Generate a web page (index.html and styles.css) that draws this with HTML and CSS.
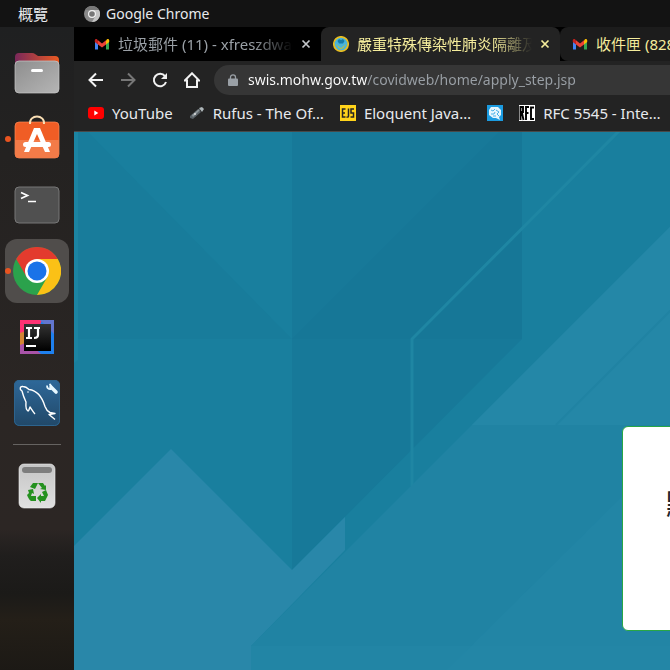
FILE: index.html
```html
<!DOCTYPE html>
<html lang="zh-TW">
<head>
<meta charset="utf-8">
<title>嚴重特殊傳染性肺炎隔離</title>
<link rel="stylesheet" href="styles.css">
</head>
<body>
<svg class="defs" aria-hidden="true">
  <symbol id="gmail" viewBox="0 0 16 16">
    <path d="M1 4v9.500h3V8z" fill="#4285f4"/>
    <path d="M15 4v9.500h-3V8z" fill="#34a853"/>
    <path d="M12 4.500l1-1.200c1-.8 2.200-.1 2.200 1.200V6L12 8.500z" fill="#fbbc04"/>
    <path d="M4 4.500L3 3.300C2 2.500.8 3.200.8 4.500V6L4 8.500z" fill="#c5221f"/>
    <path d="M4 4.300l4 3.100 4-3.100v4.200l-4 3.100-4-3.100z" fill="#ea4335"/>
  </symbol>
  <symbol id="close" viewBox="0 0 10 10">
    <path d="M1.500 1.500l7 7M8.500 1.500l-7 7" stroke="currentColor" stroke-width="1.700" fill="none"/>
  </symbol>
</svg>

<header class="topbar">
  <button class="overview">概覽</button>
  <button class="app-menu">
    <svg class="i16" viewBox="0 0 16 16"><circle cx="8" cy="8" r="8" fill="#8a8a8a"/><path d="M8 4h7a8 8 0 0 1-7 12l3.500-6z" fill="#c4c4c4"/><path d="M1 4a8 8 0 0 1 14 0H8z" fill="#777"/><circle cx="8" cy="8" r="4" fill="#f2f2f2"/><circle cx="8" cy="8" r="2.800" fill="#777"/></svg>
    Google Chrome
  </button>
</header>

<div class="desktop">
  <nav class="dock" aria-label="Dock">
    <button class="tile" aria-label="檔案">
      <svg width="46" height="42" viewBox="0 0 46 42">
        <defs><linearGradient id="fb"><stop offset="0" stop-color="#79285a"/><stop offset="1" stop-color="#ea5a22"/></linearGradient>
        <linearGradient id="ff" x2="1" y2="1"><stop offset="0" stop-color="#8e8e8e"/><stop offset="1" stop-color="#b5b5b5"/></linearGradient></defs>
        <path d="M1 22V5q0-4 4-4h13q2 0 3 1l3 2h17q4 0 4 4v14z" fill="url(#fb)"/>
        <rect x="1" y="9" width="44" height="32" rx="4" fill="url(#ff)" stroke="#c9c9c9" stroke-width=".7"/>
        <rect x="17" y="17" width="12" height="3" rx="1.500" fill="#fff"/>
      </svg>
    </button>
    <button class="tile running" aria-label="軟體">
      <svg width="46" height="52" viewBox="0 0 46 52">
        <rect x="1" y="9" width="44" height="36" rx="4" fill="#f05d25" stroke="#fa8a58" stroke-width=".7"/>
        <path d="M1 27h44v14q0 4-4 4H5q-4 0-4-4z" fill="#f37b48"/>
        <path d="M16 11C15 1 31 1 30 11" fill="none" stroke="#f9deb4" stroke-width="2"/>
        <path d="M20 15h6l10 24h-5l-8-18-8 18h-5z" fill="#fff"/>
        <rect x="9" y="29" width="28" height="5" rx="2.500" fill="#fff"/>
      </svg>
    </button>
    <button class="tile" aria-label="終端機">
      <svg width="46" height="38" viewBox="0 0 46 38">
        <rect x="1" y="1" width="44" height="36" rx="4" fill="#505050" stroke="#777" stroke-width="1"/>
        <path d="M7 6.500l6.500 3L7 12.500M14 15.500h8" fill="none" stroke="#fff" stroke-width="1.700"/>
      </svg>
    </button>
    <button class="tile running current" aria-label="Google Chrome">
      <svg width="48" height="48" viewBox="0 0 48 48">
        <circle cx="24" cy="24" r="24" fill="#2ba24c"/>
        <path d="M24 12h20.800A24 24 0 0 1 24 48l10.400-18z" fill="#fbc116"/>
        <path d="M3.200 12a24 24 0 0 1 41.600 0H24L13.600 30z" fill="#e33b2e"/>
        <circle cx="24" cy="24" r="12" fill="#fff"/><circle cx="24" cy="24" r="9.500" fill="#1a73e8"/>
      </svg>
    </button>
    <button class="tile" aria-label="IntelliJ IDEA">
      <svg width="34" height="34" viewBox="0 0 34 34">
        <defs><linearGradient id="ib" x1="0" y1="0" x2="0" y2="1"><stop offset="0" stop-color="#333"/><stop offset="1" stop-color="#000"/></linearGradient></defs>
        <path d="M0 0h34v34H0z" fill="#1e80ef"/>
        <path d="M0 0h22l-4 10L0 18z" fill="#fe3273"/><path d="M20 0h14v14z" fill="#6276cf"/>
        <path d="M0 13l6-2v13l-6 3z" fill="#d48533"/><path d="M0 25l8-3 13 12H0z" fill="#a953a8"/>
        <path d="M4 4h27v27H4z" fill="url(#ib)"/>
        <path d="M6 8h6M6 18h6M9 8v10M14 8h6M18 8v7q0 3-4 3" fill="none" stroke="#fff" stroke-width="2.200"/><path d="M6 25h10v2H6z" fill="#fff"/>
      </svg>
    </button>
    <button class="tile" aria-label="MySQL Workbench">
      <svg width="46" height="46" viewBox="0 0 46 46">
        <defs><linearGradient id="mb" x1="0" y1="0" x2="0" y2="1"><stop offset="0" stop-color="#2e6899"/><stop offset="1" stop-color="#214868"/></linearGradient></defs>
        <rect width="46" height="46" rx="5" fill="url(#mb)"/>
        <rect x=".5" y=".5" width="45" height="45" rx="5" fill="none" stroke="#2d648e"/>
        <path d="M21 34c-2-2-3-4-5-7-1 2-1 4-2 4-3-2-2-6-2-9-2-4-3-7-4-11C5 9 6 6 9 6.500c2 0 4 1 6 3 8 1 13 7 16 17 1 3 3 5 5 6l5 1-6 1 6 5" fill="none" stroke="#fff" stroke-width="1.400" stroke-linejoin="round"/>
        <circle cx="14" cy="12" r=".8" fill="#fff"/>
        <path d="M37 7l5 5" stroke="#e6f7ff" stroke-width="3.600" stroke-linecap="round"/><path d="M33 5.500q0 4 4 3.500 1-3-1.500-5" fill="none" stroke="#e6f7ff" stroke-width="1.800"/>
      </svg>
    </button>
    <hr class="dock-rule">
    <button class="tile" aria-label="垃圾桶">
      <svg width="38" height="46" viewBox="0 0 38 46">
        <defs><linearGradient id="tb" x1="0" y1="0" x2="0" y2="1"><stop offset="0" stop-color="#c5c5c5"/><stop offset="1" stop-color="#e0e0e0"/></linearGradient></defs>
        <rect x="1" y="1" width="36" height="44" rx="5" fill="url(#tb)" stroke="#f0f0f0" stroke-width=".6"/>
        <rect x="4" y="4" width="30" height="6" rx="3" fill="#7e7e7e"/>
        <g fill="#24911f"><path d="M12 24l3-4h5l-3 6zM20 20h5l2 3 1-1v5l-6-1 2-1z"/>
        <path d="M10 27l5-1 1 5-2-1-1 3h5v5h-5q-2-1-4-6l2-2z"/><path d="M28 27l2 5-3 6h-4v2l-4-5 4-4v2h3l-2-4z"/></g>
      </svg>
    </button>
  </nav>

  <main class="browser">
    <div class="tabs" role="tablist">
      <div class="tab" role="tab">
        <svg class="i16"><use href="#gmail"/></svg>
        <span class="tab-title">垃圾郵件 (11) - xfreszdwa@</span>
        <button class="tab-close" aria-label="關閉"><svg><use href="#close"/></svg></button>
      </div>
      <div class="tab active" role="tab" aria-selected="true">
        <svg class="i16" viewBox="0 0 16 16"><circle cx="8" cy="8" r="7.200" fill="#48b4dc" stroke="#e7bd21" stroke-width="1.700"/><path d="M4.500 5l1.500-2 2 1 2-1 1.500 2-1.500 2.500H6z" fill="#167ba8"/><path d="M3 8.500l5 4 5-4M5 11l3 2 3-2" fill="none" stroke="#a9bf59"/></svg>
        <span class="tab-title">嚴重特殊傳染性肺炎隔離及</span>
        <button class="tab-close" aria-label="關閉"><svg><use href="#close"/></svg></button>
      </div>
      <div class="tab next" role="tab">
        <svg class="i16"><use href="#gmail"/></svg>
        <span class="tab-title">收件匣 (828</span>
      </div>
    </div>

    <div class="toolbar">
      <button class="tool" aria-label="上一頁"><svg viewBox="0 0 16 16"><path d="M15 8H2M8 1.500L1.500 8 8 14.500"/></svg></button>
      <button class="tool dim" aria-label="下一頁"><svg viewBox="0 0 16 16"><path d="M1 8h13M8 1.500L14.500 8 8 14.500"/></svg></button>
      <button class="tool" aria-label="重新載入"><svg viewBox="0 0 16 16"><path d="M13 4.200A6.200 6.200 0 1 0 14 10"/><path d="M15 1v6H9z" class="solid"/></svg></button>
      <button class="tool" aria-label="首頁"><svg viewBox="0 0 16 16"><path d="M.8 8.500L8 1.300l7.200 7.200H13V15H3V8.500z"/></svg></button>
      <label class="omnibox">
        <svg width="10" height="12" viewBox="0 0 10 12"><path d="M1 4.500h8q1 0 1 1V11q0 1-1 1H1q-1 0-1-1V5.500q0-1 1-1z" fill="#9aa0a6"/><path d="M2.500 5V3.300a2.500 2.500 0 0 1 5 0V5" fill="none" stroke="#9aa0a6" stroke-width="1.300"/></svg>
        <input class="address" type="text" aria-label="網址" value="swis.mohw.gov.tw/covidweb/home/apply_step.jsp">
      </label>
    </div>

    <nav class="bookmarks" aria-label="書籤">
      <a href="#"><svg class="i16" viewBox="0 0 16 16"><rect y="2" width="16" height="12" rx="3" fill="#f00"/><path d="M6.300 5.500v5l4-2.500z" fill="#fff"/></svg>YouTube</a>
      <a href="#"><svg class="i16" viewBox="0 0 16 16"><path d="M1 11l8-7 3 3-8 7-3-1z" fill="#596166"/><path d="M3 10l7-6 1 1-7 7z" fill="#8e979b"/><path d="M10 3l3-1 2 2-2 3z" fill="#aeb6b9"/><circle cx="6" cy="9" r="1" fill="#ddd"/></svg>Rufus - The Of…</a>
      <a href="#"><svg class="i16" viewBox="0 0 16 16"><path d="M0 0h16v16H0z" fill="#ffd31a"/><path d="M5.500 4H2.500v8h3M2.500 8h2.500M8.500 3.500V11q0 1.500-2 1M14 4h-3v4h2.500v4H10.500" fill="none" stroke="#242424" stroke-width="1.500"/></svg>Eloquent Java…</a>
      <a href="#" aria-label="書籤"><svg class="i16" viewBox="0 0 16 16"><path d="M0 0h16v16H0z" fill="#1b9be0"/><path d="M4 2h7l3 3v5l-2 2 1 3-4-2H6l-4-3V5z" fill="#e5f5fd"/><path d="M4 5l2 1 2-2M4 9h3l1-2M9 5l3 2-2 2 2 2M6 11h3" fill="none" stroke="#4bb2e7"/></svg></a>
      <a href="#"><svg class="i16" viewBox="0 0 16 16"><path d="M0 0h16v16H0z" fill="#fff"/><path d="M1.500 15V2H4v5H2M3 8l1.500 7M7 15V2h3M7 8h2.500M15 2.500h-3V14h3" fill="none" stroke="#000" stroke-width="1.900"/></svg>RFC 5545 - Inte…</a>
    </nav>

    <section class="page">
      <svg class="backdrop" viewBox="1 0 596 539" preserveAspectRatio="xMinYMin slice" aria-hidden="true">
        <path d="M0 0h600v539H0z" fill="#197f9e"/>
        <path d="M0 0h5v228l-5 4z" fill="#1c84a2"/>
        <path d="M5 0h10l204 207H5z" fill="#187c9b"/>
        <path d="M219 0h230v207L219 438z" fill="#177999"/>
        <path d="M426 0h23v207H219z" fill="#167797"/>
        <path d="M547-2L339 207v147" fill="none" stroke="#1f86a3" stroke-width="3"/>
        <path d="M0 415l98-98 121 121 53-53v33l-94 96v25H0z" fill="#2987a9"/>
        <path d="M600 92v447H178v-25z" fill="#2083a3"/>
        <path d="M600 92v201H399z" fill="#2487a7"/>
        <path d="M600 176L483 293" stroke="#2083a3" stroke-width="2"/>
        <path d="M600 314v225H373z" fill="#2285a5"/>
        <path d="M178 514h422v25H178z" fill="#2387a7" opacity=".5"/>
      </svg>
      <article class="card"><h1>點</h1></article>
    </section>
  </main>
</div>
</body>
</html>
```
FILE: styles.css
```css
* { box-sizing: border-box; }

body {
  margin: 0;
  min-height: 100vh;
  display: flex;
  flex-direction: column;
  overflow: hidden;
  background: #131313;
  color: #e8eaed;
  font: 15px/20px "Noto Sans", "Noto Sans CJK TC", sans-serif;
}

button {
  padding: 0;
  border: 0;
  background: none;
  color: inherit;
  font: inherit;
}

svg { display: block; flex: none; }
.defs { position: absolute; width: 0; height: 0; }
.i16 { width: 16px; height: 16px; }

.topbar {
  display: flex;
  align-items: center;
  height: 27px;
  padding-left: 18px;
  gap: 36px;
  font-size: 14px;
}

.overview { font-size: 15px; }
.app-menu { display: flex; align-items: center; gap: 6px; }

.desktop { flex: 1; display: flex; }

.dock {
  flex: none;
  width: 74px;
  padding-top: 14px;
  display: flex;
  flex-direction: column;
  align-items: center;
  gap: 2px;
  background: linear-gradient(#1f2021 0, #242221 20%, #2b2624 60%, #2c2624 78%, #201e1d 82%, #1b1a18 88%, #241f18 92%, #1c1915 100%);
}

.tile {
  position: relative;
  width: 64px;
  height: 64px;
  display: grid;
  place-items: center;
  border-radius: 12px;
}

.current { background: #504d4b; }

.running::before {
  content: "";
  position: absolute;
  left: 0;
  top: 29px;
  width: 6px;
  height: 6px;
  border-radius: 50%;
  background: #e95420;
}

.dock-rule {
  width: 48px;
  height: 1px;
  margin: 7px 0;
  border: 0;
  background: #666361;
}

.browser {
  flex: 1;
  min-width: 0;
  display: flex;
  flex-direction: column;
  background: #232323;
}

.tabs { display: flex; height: 34px; background: #000; overflow: hidden; }

.tab {
  flex: none;
  width: 239px;
  display: flex;
  align-items: center;
  gap: 8px;
  padding: 0 10px 0 12px;
  color: #9aa0a6;
}

.tab:first-child { width: 247px; padding-left: 20px; }
.tab.active { background: #232323; border-radius: 8px 8px 0 0; color: #f5ed9c; }
.tab.next { background: #1c1c1c; border-radius: 8px 0 0 8px; color: #f5ed9c; }

.tab-title {
  flex: 1;
  min-width: 0;
  overflow: hidden;
  white-space: nowrap;
  mask-image: linear-gradient(to left, transparent, #000 40px);
}

.next .tab-title { mask-image: none; }
.tab-close svg { width: 10px; height: 10px; }
.tab-close { color: #c4c7ca; }
.active .tab-close { color: #f5ed9c; }

.toolbar {
  display: flex;
  align-items: center;
  height: 38px;
  padding-left: 14px;
  gap: 16px;
}

.tool svg { width: 16px; height: 16px; }
.tool path { fill: none; stroke: #f1f1f1; stroke-width: 2; }
.tool .solid { fill: #f1f1f1; stroke: none; }
.tool.dim path { stroke: #777; }

.omnibox {
  flex: 1;
  height: 30px;
  display: flex;
  align-items: center;
  gap: 10px;
  margin-left: -2px;
  padding-left: 14px;
  border-radius: 15px 0 0 15px;
  background: #363636;
}

.address {
  flex: 1;
  min-width: 0;
  padding: 0;
  border: 0;
  outline: 0;
  font: inherit;
  font-size: 14px;
  color: transparent;
  background: linear-gradient(to right, #fff 119px, #9aa0a6 119px);
  background-clip: text;
}

.bookmarks {
  display: flex;
  align-items: center;
  height: 33px;
  padding: 0 0 4px 14px;
  gap: 16px;
  border-bottom: 1px solid #484848;
  overflow: hidden;
  white-space: nowrap;
}

.bookmarks a {
  display: flex;
  align-items: center;
  gap: 8px;
  color: inherit;
  text-decoration: none;
}

.page {
  position: relative;
  flex: 1;
  overflow: hidden;
  padding: 294px 0 40px 548px;
}

.backdrop { position: absolute; inset: 0; width: 100%; height: 100%; }

.card {
  position: relative;
  width: 400px;
  height: 205px;
  padding: 56px 43px;
  border: 1px solid #28a745;
  border-radius: 6px;
  background: #fff;
}

h1 {
  margin: 0;
  color: #212529;
  font: 500 28px/40px "Noto Sans CJK TC", sans-serif;
}
```
